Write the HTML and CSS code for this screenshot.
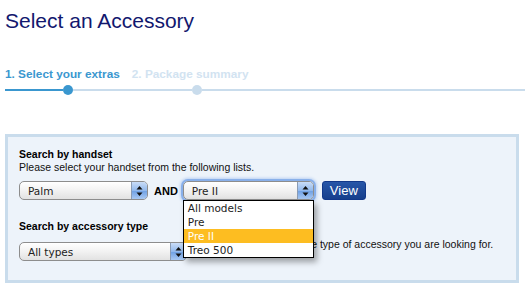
FILE: index.html
```html
<!DOCTYPE html>
<html lang="en">
<head>
    <meta charset="UTF-8">
    <title>Select an Accessory</title>
    <link rel="stylesheet" href="styles.css">
</head>
<body>
    <h1 class="title">Select an Accessory</h1>

    <div class="steps">
        <div class="step-labels">
            <span class="step current">1. Select your extras</span>
            <span class="step">2. Package summary</span>
        </div>
        <div class="progress">
            <span class="bar done first"></span>
            <span class="dot done"></span>
            <span class="bar middle"></span>
            <span class="dot"></span>
            <span class="bar rest"></span>
        </div>
    </div>

    <div class="panel">
        <h2 class="panel-title">Search by handset</h2>
        <p class="panel-text">Please select your handset from the following lists.</p>
        <div class="row">
            <div class="select make">
                <span class="select-value">Palm</span>
                <span class="select-arrows">
                    <svg width="7" height="10" viewBox="0 0 7 10"><path d="M3.5 0 L6.5 3.5 L0.5 3.5 Z M3.5 10 L6.5 6.5 L0.5 6.5 Z" fill="#111"/></svg>
                </span>
            </div>
            <span class="and">AND</span>
            <div class="select model focused">
                <span class="select-value">Pre II</span>
                <span class="select-arrows">
                    <svg width="7" height="10" viewBox="0 0 7 10"><path d="M3.5 0 L6.5 3.5 L0.5 3.5 Z M3.5 10 L6.5 6.5 L0.5 6.5 Z" fill="#111"/></svg>
                </span>
                <ul class="dropdown">
                    <li>All models</li>
                    <li>Pre</li>
                    <li class="selected">Pre II</li>
                    <li>Treo 500</li>
                </ul>
            </div>
            <button class="view-btn">View</button>
        </div>

        <h2 class="panel-title second">Search by accessory type</h2>
        <div class="row type-row">
            <div class="select type">
                <span class="select-value">All types</span>
                <span class="select-arrows">
                    <svg width="7" height="10" viewBox="0 0 7 10"><path d="M3.5 0 L6.5 3.5 L0.5 3.5 Z M3.5 10 L6.5 6.5 L0.5 6.5 Z" fill="#111"/></svg>
                </span>
            </div>
            <span class="type-hint">Please select the type of accessory you are looking for.</span>
        </div>
    </div>
</body>
</html>
```

FILE: styles.css
```css
body {
    margin: 0;
    font-family: "Liberation Sans", Arial, sans-serif;
    background-color: #fff;
    color: #000;
}
.title {
    margin: 0;
    padding: 7px 5px 0;
    font-size: 21px;
    font-weight: normal;
    line-height: 27px;
    color: #12176e;
}
.steps {
    margin-top: 32px;
}
.step-labels {
    display: flex;
    gap: 12px;
    padding-left: 5px;
    height: 16px;
}
.step {
    font-size: 11.8px;
    font-weight: bold;
    line-height: 16px;
    color: #d2e3f1;
}
.step.current {
    color: #3a97cf;
}
.progress {
    display: flex;
    align-items: center;
    height: 10px;
    margin-top: 3px;
}
.bar {
    height: 2px;
    background-color: #c9dcec;
}
.bar.done {
    background-color: #3a97cf;
}
.bar.first {
    margin-left: 5px;
    width: 58px;
}
.bar.middle {
    width: 119px;
}
.bar.rest {
    flex: 1;
}
.dot {
    width: 10px;
    height: 10px;
    border-radius: 50%;
    background-color: #c9dcec;
}
.dot.done {
    background-color: #3a97cf;
}
.panel {
    margin: 39px 0 0 5px;
    width: 514px;
    box-sizing: border-box;
    border: 3px solid #c9dcec;
    background-color: #edf3fa;
    padding: 11px 11px 19px;
}
.panel-title {
    margin: 0;
    font-size: 10.5px;
    font-weight: bold;
    line-height: 13px;
}
.panel-title.second {
    margin-top: 20px;
}
.panel-text {
    margin: 0;
    font-size: 10.5px;
    line-height: 13px;
    color: #111;
}
.row {
    display: flex;
    align-items: center;
    margin-top: 7px;
}
.select {
    position: relative;
    display: flex;
    align-items: center;
    height: 19px;
    box-sizing: border-box;
    border: 1px solid #8d8d8d;
    border-radius: 5px;
    background: linear-gradient(#ffffff, #f2f2f2 50%, #e2e2e2);
    box-shadow: inset 0 1px 0 #fff;
    font-family: "DejaVu Sans", sans-serif;
    font-size: 10.5px;
    color: #222;
}
.select.make {
    width: 129px;
}
.select.model {
    width: 131px;
    margin-left: 5px;
}
.select.type {
    width: 168px;
}
.select.focused {
    box-shadow: 0 0 0 2px #89b0ea, 0 0 3px 3px #b9d0f3;
}
.select-value {
    flex: 1;
    padding-left: 8px;
}
.select-arrows {
    display: flex;
    align-items: center;
    justify-content: center;
    width: 15px;
    height: 100%;
    border-left: 1px solid #8a9bb3;
    border-radius: 0 4px 4px 0;
    background: linear-gradient(#c9dcf7, #92b9ec 50%, #6d9fe3 51%, #a8c8f2);
}
.and {
    margin-left: 6px;
    font-size: 11px;
    font-weight: bold;
}
.view-btn {
    margin-left: 8px;
    height: 19px;
    padding: 0 7px;
    border: 1px solid #12388a;
    border-radius: 3px;
    background: linear-gradient(#2756a8, #173f8c);
    color: #fff;
    font-family: "Liberation Sans", Arial, sans-serif;
    font-size: 13px;
    line-height: 17px;
}
.dropdown {
    position: absolute;
    top: 18px;
    left: -1px;
    z-index: 2;
    width: 131px;
    margin: 0;
    padding: 0;
    list-style: none;
    box-sizing: border-box;
    border: 1px solid #000;
    background-color: #fff;
    box-shadow: 3px 4px 6px rgba(0,0,0,0.35);
    font-size: 10.5px;
}
.dropdown li {
    height: 14px;
    line-height: 14px;
    padding-left: 4px;
    color: #222;
}
.dropdown li.selected {
    background-color: #fdbd21;
    color: #fff;
}
.type-row {
    margin-top: 9px;
    align-items: flex-start;
}
.type-hint {
    margin: -4px 0 0 50px;
    font-size: 10.5px;
    line-height: 13px;
    color: #111;
    white-space: nowrap;
}
```
